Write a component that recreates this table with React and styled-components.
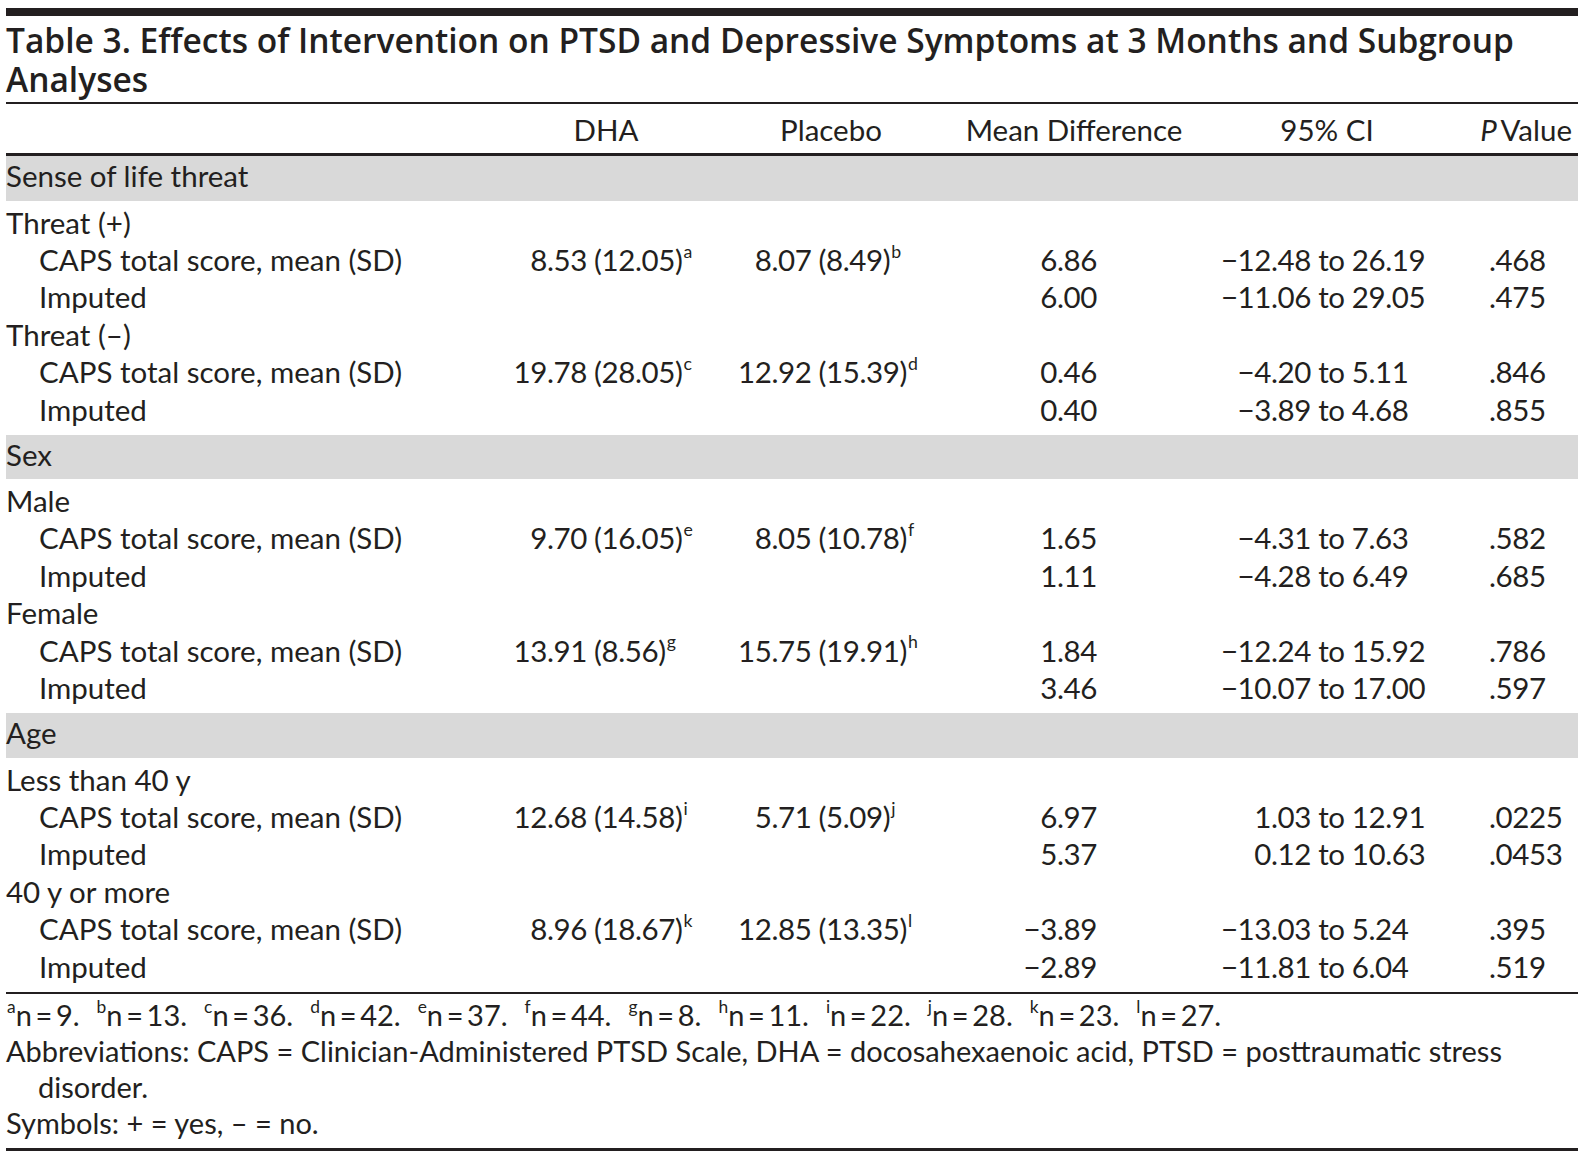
import React from 'react'
import styled, { createGlobalStyle } from 'styled-components'

const ink = '#231f20'
const band = '#d9d9d9'

const GlobalStyle = createGlobalStyle`
  body {
    margin: 0;
    background: #fff;
    color: ${ink};
    font-family: Lato, "Noto Sans", sans-serif;
  }
`

const Page = styled.div`
  width: 1572px;
  padding: 8px 7px 0 6px;
`

const TopBar = styled.div`
  height: 8px;
  background: ${ink};
`

const Title = styled.h1`
  margin: 0;
  padding: 5px 0 4px;
  font-family: "Open Sans", sans-serif;
  font-weight: 600;
  font-size: 33.5px;
  line-height: 38.5px;
  border-bottom: 2px solid ${ink};
`

const Table = styled.table`
  width: 100%;
  border-collapse: collapse;
  table-layout: fixed;
  font-size: 29.5px;
`

const Head = styled.th`
  height: 48px;
  padding: 1px ${p => p.$right ? '6px' : '0'} 0 0;
  font-weight: 400;
  text-align: ${p => p.$right ? 'right' : 'center'};
  vertical-align: middle;
  border-bottom: 3px solid ${ink};
`

const BandCell = styled.td`
  height: 39.5px;
  padding: 0 0 5px;
  background: ${band};
  vertical-align: middle;
`

const Cell = styled.td`
  padding: ${p => p.$first ? '3px' : '0'} ${p => p.$padRight || 0}px ${p => p.$last ? '6.6px' : '0'} ${p => p.$padLeft || 0}px;
  line-height: 37.4px;
  white-space: nowrap;
  text-align: ${p => p.$align || 'left'};
  vertical-align: top;
`

const Num = styled.span`
  letter-spacing: -0.4px;
`

const Sup = styled.sup`
  font-size: 0.6em;
  line-height: 0;
  vertical-align: 0.75em;
  margin-left: 1px;
`

const CiLow = styled.span`
  display: inline-block;
  width: 92px;
  text-align: right;
  letter-spacing: -0.4px;
`

const Notes = styled.div`
  padding: 3px 0 7px;
  font-size: 29px;
  line-height: 36px;
  border-top: 2px solid ${ink};
  border-bottom: 3px solid ${ink};
`

const Note = styled.p`
  margin: 0;
  padding-left: ${p => p.$hang ? '32px' : '0'};
  text-indent: ${p => p.$hang ? '-32px' : '0'};
`

const Count = styled.span`
  margin-right: 16px;
`

const M = '\u2212'
const F = '\u2007'
const eq = '\u00a0=\u00a0'
const thinEq = '\u2009=\u2009'

const sections = [
  {
    title: 'Sense of life threat',
    groups: [
      { name: 'Threat (+)', dha: [`${F}8.53 (12.05)`, 'a'], pla: [`${F}8.07 (8.49)`, 'b'], md: ['6.86', '6.00'], ci: [[`${M}12.48`, '26.19'], [`${M}11.06`, '29.05']], p: ['.468', '.475'] },
      { name: 'Threat (\u2013)', dha: ['19.78 (28.05)', 'c'], pla: ['12.92 (15.39)', 'd'], md: ['0.46', '0.40'], ci: [[`${M}4.20`, '5.11'], [`${M}3.89`, '4.68']], p: ['.846', '.855'] },
    ],
  },
  {
    title: 'Sex',
    groups: [
      { name: 'Male', dha: [`${F}9.70 (16.05)`, 'e'], pla: [`${F}8.05 (10.78)`, 'f'], md: ['1.65', '1.11'], ci: [[`${M}4.31`, '7.63'], [`${M}4.28`, '6.49']], p: ['.582', '.685'] },
      { name: 'Female', dha: ['13.91 (8.56)', 'g'], pla: ['15.75 (19.91)', 'h'], md: ['1.84', '3.46'], ci: [[`${M}12.24`, '15.92'], [`${M}10.07`, '17.00']], p: ['.786', '.597'] },
    ],
  },
  {
    title: 'Age',
    groups: [
      { name: 'Less than 40 y', dha: ['12.68 (14.58)', 'i'], pla: [`${F}5.71 (5.09)`, 'j'], md: ['6.97', '5.37'], ci: [['1.03', '12.91'], ['0.12', '10.63']], p: ['.0225', '.0453'] },
      { name: '40 y or more', dha: [`${F}8.96 (18.67)`, 'k'], pla: ['12.85 (13.35)', 'l'], md: [`${M}3.89`, `${M}2.89`], ci: [[`${M}13.03`, '5.24'], [`${M}11.81`, '6.04']], p: ['.395', '.519'] },
    ],
  },
]

function Value({ v }) {
  return <><Num>{v[0]}</Num><Sup>{v[1]}</Sup></>
}

function Ci({ v }) {
  return <><CiLow>{v[0]}</CiLow><Num>{` to ${v[1]}`}</Num></>
}

function Section({ section }) {
  const rows = []
  section.groups.forEach((g, gi) => {
    const first = gi === 0
    const last = gi === section.groups.length - 1
    rows.push(
      <tr key={g.name}>
        <Cell $first={first}>{g.name}</Cell>
        <Cell $first={first} colSpan={5} />
      </tr>,
      <tr key={g.name + '-caps'}>
        <Cell $padLeft={33}>CAPS total score, mean (SD)</Cell>
        <Cell $padLeft={13.5}><Value v={g.dha} /></Cell>
        <Cell $padLeft={26}><Value v={g.pla} /></Cell>
        <Cell $align='right' $padRight={101}><Num>{g.md[0]}</Num></Cell>
        <Cell $padLeft={21}><Ci v={g.ci[0]} /></Cell>
        <Cell $padLeft={33}><Num>{g.p[0]}</Num></Cell>
      </tr>,
      <tr key={g.name + '-imp'}>
        <Cell $last={last} $padLeft={33}>Imputed</Cell>
        <Cell $last={last} />
        <Cell $last={last} />
        <Cell $last={last} $align='right' $padRight={101}><Num>{g.md[1]}</Num></Cell>
        <Cell $last={last} $padLeft={21}><Ci v={g.ci[1]} /></Cell>
        <Cell $last={last} $padLeft={33}><Num>{g.p[1]}</Num></Cell>
      </tr>
    )
  })
  return (
    <tbody>
      <tr>
        <BandCell colSpan={6}>{section.title}</BandCell>
      </tr>
      {rows}
    </tbody>
  )
}

const footCounts = [['a', '9'], ['b', '13'], ['c', '36'], ['d', '42'], ['e', '37'], ['f', '44'], ['g', '8'], ['h', '11'], ['i', '22'], ['j', '28'], ['k', '23'], ['l', '27']]

export default function App() {
  return (
    <Page>
      <GlobalStyle />
      <TopBar />
      <Title>
        Table 3. Effects of Intervention on PTSD and Depressive Symptoms at 3 Months and Subgroup<br />
        Analyses
      </Title>
      <Table>
        <colgroup>
          <col style={{ width: 494 }} />
          <col style={{ width: 212 }} />
          <col style={{ width: 238 }} />
          <col style={{ width: 248 }} />
          <col style={{ width: 258 }} />
          <col style={{ width: 122 }} />
        </colgroup>
        <thead>
          <tr>
            <Head />
            <Head>DHA</Head>
            <Head>Placebo</Head>
            <Head>Mean Difference</Head>
            <Head>95% CI</Head>
            <Head $right><i>P</i>{'\u2009Value'}</Head>
          </tr>
        </thead>
        {sections.map(s => <Section key={s.title} section={s} />)}
      </Table>
      <Notes>
        <Note>
          {footCounts.map(([l, n]) => (
            <Count key={l}><Sup>{l}</Sup>{`n${thinEq}${n}.`}</Count>
          ))}
        </Note>
        <Note $hang>
          {`Abbreviations: CAPS${eq}Clinician-Administered PTSD Scale, DHA${eq}docosahexaenoic acid, PTSD${eq}posttraumatic stress disorder.`}
        </Note>
        <Note>{`Symbols: +${eq}yes, \u2013${eq}no.`}</Note>
      </Notes>
    </Page>
  )
}
